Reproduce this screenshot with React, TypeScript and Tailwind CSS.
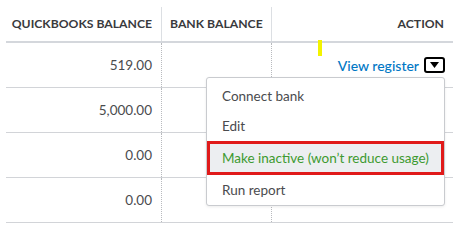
import React from "react";

const font = { fontFamily: "Lato, 'Open Sans', 'Liberation Sans', sans-serif" };

export default function App() {
  const rows = ["519.00", "5,000.00", "0.00", "0.00"];
  return (
    <div className="relative w-[470px] h-[242px] bg-white overflow-hidden" style={font}>
      <div className="ml-[6px] w-[447px]">
        {/* header */}
        <div className="grid grid-cols-[155px_110px_182px] pt-[7px] border-b-[2px] border-[#d4d7dc]">
          <div className="h-[34px] flex items-center justify-end pr-[9px] whitespace-nowrap text-[12.2px] font-bold text-[#393a3d]">
            QUICKBOOKS BALANCE
          </div>
          <div className="h-[34px] flex items-center pl-[8px] border-l border-[#dcdfe3] whitespace-nowrap text-[12.2px] font-bold text-[#393a3d]">
            BANK BALANCE
          </div>
          <div className="h-[34px] flex items-center justify-end pr-[9px] border-l border-[#dcdfe3] whitespace-nowrap text-[12.2px] font-bold text-[#393a3d]">
            ACTION
          </div>
        </div>
        {/* body */}
        {rows.map((v, i) => (
          <div key={i} className="grid grid-cols-[155px_110px_182px] h-[45px] border-b border-[#d2d4d8]">
            <div className="flex items-center justify-end pr-[9px] text-[13.5px] text-[#4a4b4e]">{v}</div>
            <div className="border-l border-dotted border-[#b8babe]"></div>
            <div className="border-l border-dotted border-[#b8babe] flex items-center justify-end pr-[8px]">
              {i === 0 && (
                <div className="flex items-center gap-[5px]">
                  <span className="text-[14px] font-medium text-[#0077c5]">View register</span>
                  <span className="w-[21px] h-[16px] rounded-[3px] border-2 border-black flex items-center justify-center">
                    <svg width="9" height="6" viewBox="0 0 9 6">
                      <path d="M0 0 L9 0 L4.5 6 Z" fill="#000" />
                    </svg>
                  </span>
                </div>
              )}
            </div>
          </div>
        ))}
      </div>

      {/* yellow mark */}
      <div className="absolute left-[318px] top-[40px] w-[4px] h-[16px] bg-[#f3f300]"></div>

      {/* dropdown menu */}
      <div className="absolute left-[206px] top-[77px] w-[239px] h-[129px] bg-white border border-[#c9cbcf] rounded-[3px] shadow-[0_1px_3px_rgba(0,0,0,0.08)] pt-[3px] text-[13.5px] text-[#4a4b4e]">
        <div className="h-[31px] flex items-center pl-[15px]">Connect bank</div>
        <div className="h-[29px] flex items-center pl-[15px]">Edit</div>
        <div className="h-[34px] flex items-center pl-[12px] border-[3px] border-[#e01a1a] bg-[#eceef1] text-[#3d9a30]">
          Make inactive (won’t reduce usage)
        </div>
        <div className="h-[30px] flex items-center pl-[15px]">Run report</div>
      </div>
    </div>
  );
}
